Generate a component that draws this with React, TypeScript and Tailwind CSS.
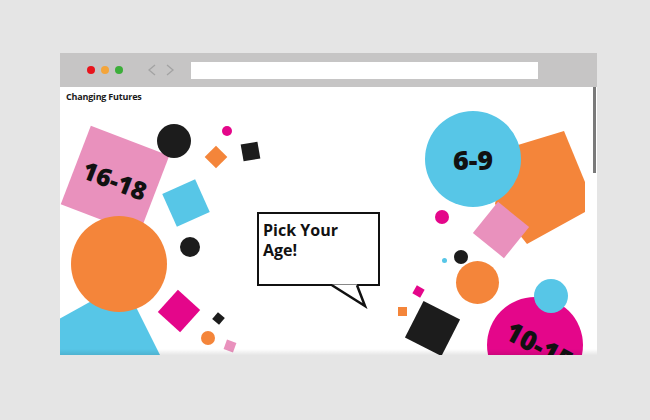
import React from "react";

const F = { fontFamily: '"Open Sans", "Noto Sans", sans-serif' };

export default function App() {
  return (
    <div className="w-[650px] h-[420px] bg-[#e5e5e5] pt-[53px] pl-[60px]">
      <div className="w-[537px] h-[302px] flex flex-col">
        {/* toolbar */}
        <div className="h-[34px] bg-[#c6c5c5] flex items-center pl-[27px]">
          <div className="flex gap-[6px]">
            <div className="w-[8px] h-[8px] rounded-full bg-[#e8141c]" />
            <div className="w-[8px] h-[8px] rounded-full bg-[#f4a53a]" />
            <div className="w-[8px] h-[8px] rounded-full bg-[#3cae3a]" />
          </div>
          <div className="flex gap-[8px] ml-[24px]">
            <svg width="10" height="12" viewBox="0 0 10 12">
              <polyline points="8,1 2,6 8,11" fill="none" stroke="#a3a3a3" strokeWidth="1.3" />
            </svg>
            <svg width="10" height="12" viewBox="0 0 10 12">
              <polyline points="2,1 8,6 2,11" fill="none" stroke="#a3a3a3" strokeWidth="1.3" />
            </svg>
          </div>
          <div className="ml-[16px] w-[347px] h-[17px] bg-white" />
        </div>
        {/* content */}
        <div className="relative h-[268px] bg-white overflow-hidden" style={F}>
          <p className="pl-[6px] pt-[5px] text-[9px] leading-[10px] font-bold text-[#1a1a1a] tracking-[-0.2px]">
            Changing Futures
          </p>

          {/* polygons */}
          <svg className="absolute left-0 top-0" width="537" height="268">
            <polygon points="-10,237 64,196 100,268 -10,268" fill="#57c6e7" />
            <polygon points="445,62 504,44 525,95 525,125 467,157 435,117" fill="#f4853a" />
          </svg>

          {/* left cluster */}
          <div className="absolute left-[13px] top-[51px] w-[84px] h-[84px] bg-[#e991bd] rotate-[21deg] flex items-center justify-center">
            <span className="text-[25px] font-extrabold text-[#111] leading-none">16-18</span>
          </div>
          <div className="absolute left-[97px] top-[37px] w-[34px] h-[34px] rounded-full bg-[#1c1c1c]" />
          <div className="absolute left-[162px] top-[39px] w-[10px] h-[10px] rounded-full bg-[#e4068a]" />
          <div className="absolute left-[148px] top-[62px] w-[16px] h-[16px] bg-[#f4853a] rotate-[45deg]" />
          <div className="absolute left-[182px] top-[56px] w-[17px] h-[17px] bg-[#1c1c1c] rotate-[-10deg]" />
          <div className="absolute left-[108px] top-[98px] w-[36px] h-[36px] bg-[#57c6e7] rotate-[-24deg]" />
          <div className="absolute left-[11px] top-[129px] w-[96px] h-[96px] rounded-full bg-[#f4853a]" />
          <div className="absolute left-[120px] top-[150px] w-[20px] h-[20px] rounded-full bg-[#1c1c1c]" />
          <div className="absolute left-[104px] top-[209px] w-[30px] h-[30px] bg-[#e4068a] rotate-[42deg]" />
          <div className="absolute left-[154px] top-[227px] w-[9px] h-[9px] bg-[#1c1c1c] rotate-[40deg]" />
          <div className="absolute left-[141px] top-[244px] w-[14px] h-[14px] rounded-full bg-[#f4853a]" />
          <div className="absolute left-[165px] top-[254px] w-[10px] h-[10px] bg-[#e991bd] rotate-[20deg]" />

          {/* speech bubble */}
          <div className="absolute left-[197px] top-[125px] w-[123px] h-[74px] border-[2.5px] border-[#111] bg-white pl-[4px] pt-[6px]">
            <p className="text-[16px] font-bold leading-[20px] text-[#111]">
              Pick Your
              <br />
              Age!
            </p>
          </div>
          <svg className="absolute left-[268px] top-[196px]" width="40" height="26" viewBox="0 0 40 26">
            <polygon points="4,1.5 37,23 29,1.5" fill="white" />
            <polyline points="4,2.2 37,23 29,2.2" fill="none" stroke="#111" strokeWidth="2.5" strokeLinejoin="miter" />
          </svg>

          {/* right cluster */}
          <div className="absolute left-[365px] top-[24px] w-[96px] h-[96px] rounded-full bg-[#57c6e7] flex items-center justify-center">
            <span className="text-[27px] font-extrabold text-[#111] leading-none">6-9</span>
          </div>
          <div className="absolute left-[421px] top-[123px] w-[40px] h-[40px] bg-[#e991bd] rotate-[39deg]" />
          <div className="absolute left-[375px] top-[123px] w-[14px] h-[14px] rounded-full bg-[#e4068a]" />
          <div className="absolute left-[394px] top-[163px] w-[14px] h-[14px] rounded-full bg-[#1c1c1c]" />
          <div className="absolute left-[382px] top-[171px] w-[5px] h-[5px] rounded-full bg-[#57c6e7]" />
          <div className="absolute left-[396px] top-[174px] w-[43px] h-[43px] rounded-full bg-[#f4853a]" />
          <div className="absolute left-[427px] top-[210px] w-[96px] h-[96px] rounded-full bg-[#e4068a]" />
          <div className="absolute left-[435px] top-[243px] w-[90px] h-[30px] rotate-[28deg] flex items-center justify-center">
            <span className="text-[27px] font-extrabold text-[#111] leading-none whitespace-nowrap">10-15</span>
          </div>
          <div className="absolute left-[474px] top-[192px] w-[34px] h-[34px] rounded-full bg-[#57c6e7]" />
          <div className="absolute left-[354px] top-[200px] w-[9px] h-[9px] bg-[#e4068a] rotate-[30deg]" />
          <div className="absolute left-[338px] top-[220px] w-[9px] h-[9px] bg-[#f4853a]" />
          <div className="absolute left-[352px] top-[221px] w-[41px] h-[41px] bg-[#1c1c1c] rotate-[27deg]" />

          {/* scrollbar */}
          <div className="absolute left-[533px] top-0 w-[3px] h-[86px] bg-[#7a7a7a]" />
          {/* bottom fade */}
          <div className="absolute left-0 bottom-0 w-full h-[6px] bg-gradient-to-b from-transparent to-black/10" />
        </div>
      </div>
    </div>
  );
}
